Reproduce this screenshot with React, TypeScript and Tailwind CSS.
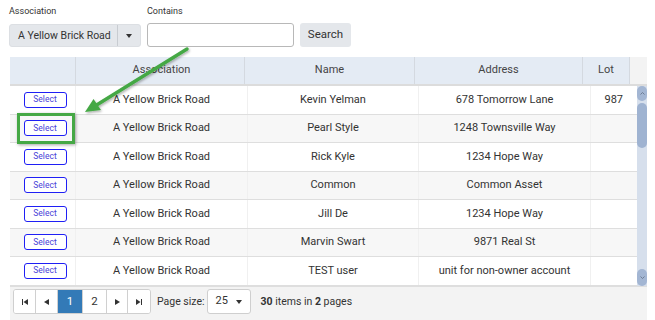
import React from 'react';

const rows = [
  { name: 'Kevin Yelman', address: '678 Tomorrow Lane', lot: '987' },
  { name: 'Pearl Style', address: '1248 Townsville Way', lot: '' },
  { name: 'Rick Kyle', address: '1234 Hope Way', lot: '' },
  { name: 'Common', address: 'Common Asset', lot: '' },
  { name: 'Jill De', address: '1234 Hope Way', lot: '' },
  { name: 'Marvin Swart', address: '9871 Real St', lot: '' },
  { name: 'TEST user', address: 'unit for non-owner account', lot: '' },
];

const Tri = ({ dir }: { dir: 'l' | 'r' }) => (
  <svg width="5" height="6" viewBox="0 0 5 6">
    {dir === 'l' ? <polygon points="5,0 5,6 0,3" fill="#333" /> : <polygon points="0,0 0,6 5,3" fill="#333" />}
  </svg>
);

const PagerBtn = ({ children, w, active }: { children: React.ReactNode; w: string; active?: boolean }) => (
  <div
    className={`${w} flex items-center justify-center border-r border-[#d0d0d0] last:border-r-0 ${
      active ? 'bg-[#337ab7] text-white' : 'bg-white text-[#333]'
    }`}
  >
    {children}
  </div>
);

export default function App() {
  return (
    <div className="relative w-[655px] h-[320px] bg-white overflow-hidden text-[#333]" style={{ fontFamily: 'Roboto, "Liberation Sans", sans-serif' }}>
      {/* filters */}
      <div className="flex gap-[6px] pl-[9px] pt-[6px]">
        <div className="flex flex-col">
          <span className="text-[9px] leading-[11px] text-[#333] mb-[6px]">Association</span>
          <div className="mt-[1px] w-[132px] h-[23px] flex items-center bg-[#e4e7eb] rounded-[3px] border border-[#dcdfe3]">
            <span className="flex-1 pl-[8px] text-[10.5px]">A Yellow Brick Road</span>
            <div className="w-[23px] h-full border-l border-[#c8ccd1] flex items-center justify-center">
              <svg width="6" height="4" viewBox="0 0 6 4"><polygon points="0,0 6,0 3,4" fill="#333" /></svg>
            </div>
          </div>
        </div>
        <div className="flex flex-col">
          <span className="text-[9px] leading-[11px] text-[#333] mb-[6px]">Contains</span>
          <div className="w-[147px] h-[24px] border border-[#b8b8b8] rounded-[3px] bg-white" />
        </div>
        <div className="flex flex-col justify-end">
          <div className="w-[51px] h-[24px] bg-[#e4e7eb] rounded-[3px] flex items-center justify-center text-[11.5px]">Search</div>
        </div>
      </div>

      {/* grid */}
      <div className="ml-[10px] mt-[10px] w-[637px]">
        <div className="flex h-[29px] bg-[#e4ebf4] border-b-2 border-[#dcdcdc] text-[11px] text-[#444]">
          <div className="w-[66px] border-r border-[#d4d9e0]" />
          <div className="w-[169px] border-r border-[#d4d9e0] flex items-center justify-center pl-[3px]">Association</div>
          <div className="w-[170px] border-r border-[#d4d9e0] flex items-center justify-center">Name</div>
          <div className="w-[168px] border-r border-[#d4d9e0] flex items-center justify-center">Address</div>
          <div className="w-[47px] border-r border-[#d4d9e0] flex items-center justify-center">Lot</div>
          <div className="flex-1 bg-[#f3f3f3]" />
        </div>
        <div className="flex">
          <div className="w-[627px] flex flex-col">
            {rows.map((r, i) => (
              <div
                key={i}
                className={`flex h-[28.5px] border-b border-[#dedede] text-[11px] ${i % 2 === 1 ? 'bg-[#f7f7f7]' : 'bg-white'}`}
              >
                <div className="w-[66px] border-r border-[#f0f0f0] flex items-center justify-center pl-[5px]">
                  <div className="w-[43px] h-[16px] border border-[#1f1ff5] rounded-[3px] flex items-center justify-center text-[8.5px] text-[#4a3fd8] bg-white">
                    Select
                  </div>
                </div>
                <div className="w-[172px] border-r border-[#f0f0f0] flex items-center justify-center">A Yellow Brick Road</div>
                <div className="w-[171px] border-r border-[#f0f0f0] flex items-center justify-center">{r.name}</div>
                <div className="w-[172px] border-r border-[#f0f0f0] flex items-center justify-center">{r.address}</div>
                <div className="w-[46px] flex items-center justify-end pr-[14px]">{r.lot}</div>
              </div>
            ))}
          </div>
          {/* scrollbar */}
          <div className="w-[10px] bg-[#d6dfec] flex flex-col justify-between">
            <div className="flex flex-col">
              <div className="h-[15px] bg-[#a3b6d3] rounded-full flex items-center justify-center">
                <svg width="5" height="3" viewBox="0 0 5 3"><polyline points="0.5,2.5 2.5,0.5 4.5,2.5" fill="none" stroke="#5f6f87" strokeWidth="0.8" /></svg>
              </div>
              <div className="mt-[2px] h-[45px] bg-[#9fb3d1] rounded-full" />
            </div>
            <div className="h-[17px] bg-[#a3b6d3] rounded-full flex items-center justify-center">
              <svg width="5" height="3" viewBox="0 0 5 3"><polyline points="0.5,0.5 2.5,2.5 4.5,0.5" fill="none" stroke="#5f6f87" strokeWidth="0.8" /></svg>
            </div>
          </div>
        </div>
        {/* pager */}
        <div className="h-[34px] bg-[#f3f3f3] border-t border-[#dedede] flex items-center pl-[3px] pb-[3px] text-[10.5px]">
          <div className="flex h-[25px] border border-[#cfcfcf] rounded-[3px] overflow-hidden bg-white text-[11.5px]">
            <PagerBtn w="w-[22px]">
              <svg width="6" height="6" viewBox="0 0 6 6"><rect x="0" y="0" width="1" height="6" fill="#333" /><polygon points="6,0 6,6 1.5,3" fill="#333" /></svg>
            </PagerBtn>
            <PagerBtn w="w-[22px]"><Tri dir="l" /></PagerBtn>
            <PagerBtn w="w-[25px]" active>1</PagerBtn>
            <PagerBtn w="w-[24px]">2</PagerBtn>
            <PagerBtn w="w-[21px]"><Tri dir="r" /></PagerBtn>
            <PagerBtn w="w-[22px]">
              <svg width="6" height="6" viewBox="0 0 6 6"><polygon points="0,0 0,6 4.5,3" fill="#333" /><rect x="5" y="0" width="1" height="6" fill="#333" /></svg>
            </PagerBtn>
          </div>
          <span className="ml-[6px]">Page size:</span>
          <div className="ml-[2px] w-[44px] h-[25px] bg-white border border-[#cfcfcf] rounded-[3px] flex items-center pl-[8px] text-[11px]">
            <span className="flex-1">25</span>
            <svg className="mr-[8px]" width="6" height="4" viewBox="0 0 6 4"><polygon points="0,0 6,0 3,4" fill="#333" /></svg>
          </div>
          <span className="ml-[10px]"><b>30</b> items in <b>2</b> pages</span>
        </div>
      </div>

      {/* annotation overlay */}
      <div className="absolute left-[17px] top-[113px] w-[58px] h-[31px] border-[3px] border-[#45a845] shadow-[1px_1px_3px_rgba(0,0,0,0.35)]" />
      <svg className="absolute left-0 top-0 pointer-events-none" width="655" height="320">
        <defs>
          <filter id="sh" x="-20%" y="-20%" width="140%" height="140%">
            <feDropShadow dx="1" dy="1.5" stdDeviation="1" floodColor="#000" floodOpacity="0.3" />
          </filter>
        </defs>
        <g filter="url(#sh)">
          <line x1="187" y1="49" x2="95" y2="106" stroke="#45a845" strokeWidth="3.5" strokeLinecap="round" />
          <polygon points="85,112 93.5,99 101,110" fill="#45a845" />
        </g>
      </svg>
    </div>
  );
}
